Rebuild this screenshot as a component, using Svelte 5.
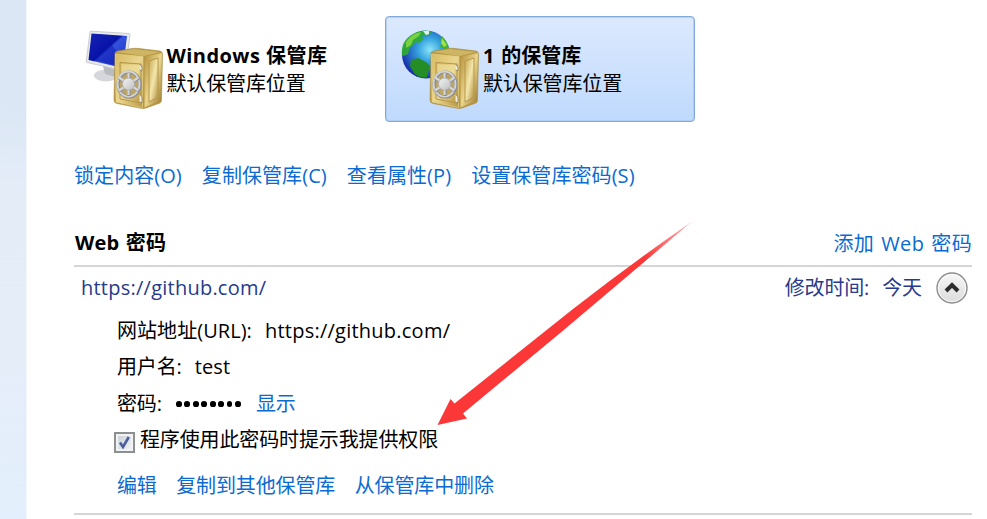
<script>
  const actions = ['锁定内容(O)', '复制保管库(C)', '查看属性(P)', '设置保管库密码(S)'];
  const entryActions = ['编辑', '复制到其他保管库', '从保管库中删除'];
  const url = 'https://github.com/';
  const vaults = [
    { kind: 'computer', name: 'Windows 保管库', selected: false },
    { kind: 'globe', name: '1 的保管库', selected: true }
  ];
  let ask = $state(true);
</script>

{#snippet vaultIcon(kind)}
  <svg class="vault-icon" width="80" height="84" viewBox="0 0 80 84">
    <defs>
      <linearGradient id="{kind}-screen" x1="0" y1="0" x2="1" y2="1">
        <stop offset="0" stop-color="#2031b4" /><stop offset=".45" stop-color="#0612a5" />
        <stop offset=".5" stop-color="#3452dc" /><stop offset="1" stop-color="#1428c8" />
      </linearGradient>
      <linearGradient id="{kind}-front" x1="0" y1="0" x2="1" y2="1">
        <stop offset="0" stop-color="#d8bb63" /><stop offset=".5" stop-color="#ead68e" /><stop offset="1" stop-color="#b99742" />
      </linearGradient>
      <linearGradient id="{kind}-side" x1="0" y1="0" x2="1" y2="1">
        <stop offset="0" stop-color="#b5923e" /><stop offset=".5" stop-color="#e9d58c" /><stop offset="1" stop-color="#96732a" />
      </linearGradient>
      <linearGradient id="{kind}-panel" x1="0" y1="0" x2="1" y2="1">
        <stop offset="0" stop-color="#c9a851" /><stop offset=".5" stop-color="#f3e6ac" /><stop offset="1" stop-color="#b08c3a" />
      </linearGradient>
      <radialGradient id="{kind}-sea" cx=".58" cy=".4" r=".62">
        <stop offset="0" stop-color="#8ce5fa" /><stop offset=".4" stop-color="#35a2de" /><stop offset="1" stop-color="#172da8" />
      </radialGradient>
      <linearGradient id="{kind}-metal" x1="0" y1="0" x2="1" y2="1">
        <stop offset="0" stop-color="#f4f4f4" /><stop offset="1" stop-color="#bdbfc2" />
      </linearGradient>
    </defs>
    {#if kind === 'computer'}
      <ellipse cx="21" cy="47.500" rx="12" ry="6" fill="#d5d7da" />
      <path d="M18 38L30 41L31 49L20 46Z" fill="#b8bbc0" />
      <path d="M5 3.500Q6 3 7 3.200L44 5.500Q45.500 6 45 7.500L40 43L2 34.500Q1 34 1.300 33Z" fill="#e6e8ea" stroke="#c0c3c8" stroke-width=".8" />
      <path d="M6.500 5.500L42 8L38 40L3.500 32Z" fill="url(#{kind}-screen)" />
      <path d="M7 6L22 7Q27 20 39 31L38 39L4 31Z" fill="#0815ad" opacity=".45" />
    {:else}
      <circle cx="25" cy="26.500" r="24" fill="url(#{kind}-sea)" />
      <path d="M1 27Q-1 11 16 4Q25 1 31 4L27 7L20 7L23 11L18 15L15 14L9 20L7 26L3 28Z" fill="#2fae2d" opacity=".9" />
      <path d="M5 14Q11 5 20 4L18 8L12 12L10 17L5 20Z" fill="#8cdb42" opacity=".8" />
      <path d="M10 32L17 30L25 34L29 38L26 49Q19 51 13 45L9 38Z" fill="#248d26" />
      <path d="M41 8Q48 15 49 26L45 25L43 21L38 18L42 15L39 12Z" fill="#3db52c" />
      <path d="M41 10L46 17L43 19L40 15Z" fill="#a2df50" />
      <path d="M22 3L28 2.500L28 6L25 7Z" fill="#dff2ee" />
    {/if}
    <path d="M30 25Q30 23.500 33 23L47 20.500Q50 20 54 20.500L75 23Q77.500 23.500 77.500 26L76.500 72Q76.500 74 75 75L61 80Q59 80.800 56 80.300L32 75.500Q29 75 29 72Z" fill="#b5943e" stroke="#ab8d40" stroke-width=".6" />
    <path d="M31 24L49 21L76 24L59 28Z" fill="#cdb563" />
    <path d="M30.500 26L58 28.500L57.500 79.500L31 74Z" fill="url(#{kind}-front)" stroke="#e6d28c" stroke-width=".7" />
    <path d="M59.500 28.500L77 25L76 72.500L59.500 79.500Z" fill="url(#{kind}-side)" />
    <path d="M64 33L73 30V69L64 74Z" fill="url(#{kind}-panel)" stroke="#b8974a" />
    <path d="M35 34.500L56 36V75L35 71Z" fill="url(#{kind}-front)" stroke="#b4964a" />
    <path d="M36.500 36L54 37.500V46L36.500 44Z" fill="#efdf9d" opacity=".6" />
    <path d="M54.500 36L57 39V43L54.500 42M54.500 66L57 69V75L54.500 74" fill="#edeadb" stroke="#8c7c50" stroke-width=".8" />
    <ellipse cx="44" cy="56.500" rx="11" ry="12.500" fill="#bda566" stroke="#8c8e91" stroke-width="3.200" />
    <ellipse cx="43.500" cy="56" rx="11" ry="12.500" fill="none" stroke="#d2d4d6" stroke-width="1.800" />
    <path d="M44 45V68M34 50L54 63M54 50L34 63" stroke="#8c8d8f" stroke-width="3.200" />
    <path d="M43.500 45V67M34 49.500L53.500 62.500M53.500 49.500L34 62.500" stroke="#d4d6d8" stroke-width="2.200" />
    <circle cx="43.500" cy="56" r="6" fill="url(#{kind}-metal)" stroke="#a9abad" stroke-width=".7" />
  </svg>
{/snippet}

<div class="window">
  <aside></aside>
  <main>
    <section class="vaults">
      {#each vaults as v}
        <div class="vault" class:selected={v.selected}>
          {@render vaultIcon(v.kind)}
          <div class="vault-text">
            <strong class={v.kind}>{v.name}</strong>
            <span>默认保管库位置</span>
          </div>
        </div>
      {/each}
    </section>

    <nav class="actions">
      {#each actions as a}<a href="#top">{a}</a>{/each}
    </nav>

    <header>
      <h2>Web 密码</h2>
      <a class="add" href="#top">添加 Web 密码</a>
    </header>

    <section class="entry">
      <div class="summary">
        <span class="url">{url}</span>
        <span class="modified">修改时间:</span>
        <span class="today">今天</span>
        <svg class="collapse" width="34" height="34" viewBox="0 0 34 34">
          <defs>
            <linearGradient id="knob" x1="0" y1="0" x2="0" y2="1">
              <stop offset="0" stop-color="#f8f8f8" /><stop offset=".5" stop-color="#e9e9e9" /><stop offset="1" stop-color="#dcdcdc" />
            </linearGradient>
          </defs>
          <circle cx="17" cy="17" r="15" fill="url(#knob)" stroke="#8b8b8b" stroke-width="1.400" />
          <circle cx="17" cy="17" r="13.700" fill="none" stroke="#fafafa" />
          <path d="M11 20L17 14L23 20" fill="none" stroke="#2d2d2d" stroke-width="4" />
        </svg>
      </div>
      <div class="details">
        <div class="line"><span class="label-url">网站地址(URL):</span><span class="url">{url}</span></div>
        <div class="line"><span class="label-user">用户名:</span><span class="user">test</span></div>
        <div class="line">
          <span class="label-pass">密码:</span>
          <span class="dots">{#each Array(8) as _}<i></i>{/each}</span>
          <a href="#top">显示</a>
        </div>
        <label class="line ask">
          <input type="checkbox" bind:checked={ask} />
          <span class="box">
            {#if ask}
              <svg width="17" height="17" viewBox="0 0 17 17"><path d="M4 8.500L7 13L12.800 3" fill="none" stroke="#4b5f9f" stroke-width="2.600" /></svg>
            {/if}
          </span>
          <span>程序使用此密码时提示我提供权限</span>
        </label>
        <nav class="line edit">
          {#each entryActions as a}<a href="#top">{a}</a>{/each}
        </nav>
      </div>
    </section>
  </main>

  <svg class="pointer" width="987" height="519" viewBox="0 0 987 519">
    <defs>
      <linearGradient id="fade" gradientUnits="userSpaceOnUse" x1="692" y1="221" x2="645" y2="259">
        <stop offset="0" stop-color="#fc3737" stop-opacity=".35" /><stop offset="1" stop-color="#fc3737" />
      </linearGradient>
    </defs>
    <path d="M692 221.500Q632 263 573 309L454.500 403.500L450.500 399L437.500 425L467 418.500L463 413.500L565 329Q630 274 692 221.500Z" fill="url(#fade)" />
  </svg>
</div>

<style>
  :global(body) { overflow: hidden; background: #fff; }
  .window {
    position: relative;
    display: flex;
    width: 987px;
    height: 519px;
    box-sizing: border-box;
    overflow: hidden;
    font: 20px/36px "Open Sans", "Noto Sans CJK SC", sans-serif;
    letter-spacing: -0.13px;
    color: #000;
    white-space: nowrap;
  }
  a { color: #0b6bd0; text-decoration: none; }
  aside {
    flex: 0 0 27px;
    box-sizing: border-box;
    background: linear-gradient(177deg, #dce7f5 0, #dbe7f5 20%, #e4ecf8 36%, #e5edf9 70%, #e3effc 100%);
    border-right: 1px solid #f3f8fd;
  }
  main { flex: 1; padding: 16px 15px 0 47px; min-width: 0; }
  .vaults { display: flex; height: 106px; gap: 1px; }
  .vault {
    display: flex;
    width: 310px;
    box-sizing: border-box;
    border: 1px solid transparent;
    border-radius: 4px;
    padding: 11px 0 0 9.500px;
  }
  .vault.selected {
    padding-left: 15px;
    border: 1.500px solid #83a9d8;
    background: linear-gradient(#dce9fd, #bfdafd);
    box-shadow: inset 0 0 0 1px #a9c6ebaa;
  }
  .vault-icon { flex: none; }
  .vault-text { display: flex; flex-direction: column; padding: 14px 0 0 2px; line-height: 28px; }
  .vault-text .computer { letter-spacing: .45px; }
  .vault-text .globe { letter-spacing: 0; word-spacing: 1.500px; }
  .actions { display: flex; gap: 20px; height: 36px; padding-top: 36px; letter-spacing: .07px; }
  header {
    display: flex;
    justify-content: space-between;
    height: 40px;
    padding-top: 31px;
    border-bottom: 2px solid #d5d5d5;
  }
  h2 { margin: 0 0 0 1px; font-size: 20px; line-height: 36px; letter-spacing: .2px; word-spacing: 1px; }
  .add { letter-spacing: .35px; word-spacing: 1.500px; line-height: 37px; }
  .url { letter-spacing: .24px; }
  .summary { display: flex; align-items: center; height: 40px; padding: 1px 2px 0 7px; color: #273a8c; }
  .summary .collapse { margin-right: 1px; }
  .modified { margin-left: auto; }
  .today { margin: 0 13px 0 13px; }
  .details { padding: 5px 0 8px 43px; border-bottom: 2px solid #d5d5d5; height: 192px; }
  .line { display: flex; height: 36.300px; }
  .line .url { margin-left: 13px; }
  .label-url { letter-spacing: .05px; }
  .user { margin-left: 13px; letter-spacing: .1px; }
  .dots { display: flex; align-items: center; gap: 2.800px; padding-top: 1px; margin: 0 15px 0 14px; }
  .dots i { width: 5.700px; height: 5.700px; border-radius: 50%; background: #000; }
  .ask { margin-left: -3px; }
  .ask input { position: absolute; opacity: 0; pointer-events: none; }
  .box {
    box-sizing: border-box;
    width: 21px;
    height: 21px;
    margin: 10px 5px 0 0;
    border: 2px solid #8e8f8f;
    background: linear-gradient(135deg, #c8ced6, #f5f6f7);
    box-shadow: inset 0 0 0 2px #f2f3f4;
    line-height: 0;
  }
  .edit { gap: 19.500px; padding-top: 10px; }
  .pointer { position: absolute; inset: 0; pointer-events: none; }
</style>
